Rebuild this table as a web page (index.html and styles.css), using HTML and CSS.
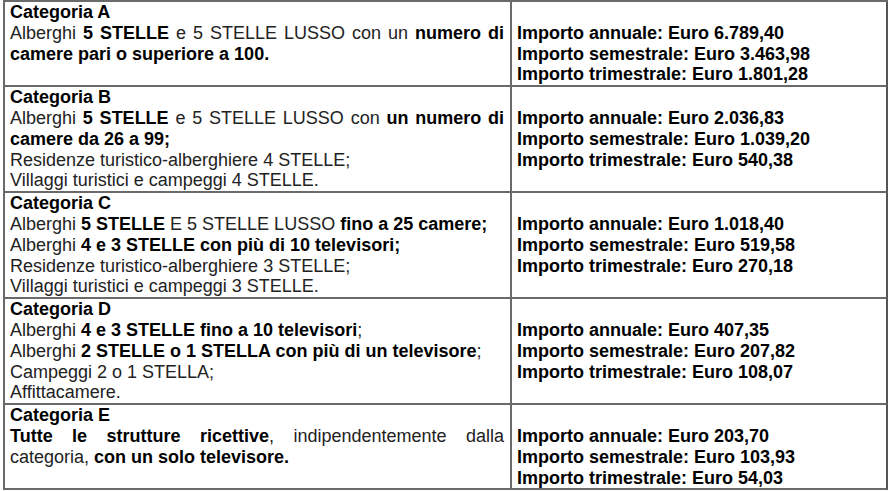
FILE: index.html
```html
<!DOCTYPE html>
<html lang="it">
<head>
<meta charset="utf-8">
<title>Categorie strutture ricettive</title>
<link rel="stylesheet" href="styles.css">
</head>
<body>
<div class="grid">
  <div class="cell left">
    <div class="cat">Categoria A</div>
    <p class="desc">Alberghi <b>5 STELLE</b> e 5 STELLE LUSSO con un <b>numero di camere pari o superiore a 100.</b></p>
  </div>
  <div class="cell right">
    <div class="amt">Importo annuale: Euro 6.789,40</div>
    <div class="amt">Importo semestrale: Euro 3.463,98</div>
    <div class="amt">Importo trimestrale: Euro 1.801,28</div>
  </div>

  <div class="cell left">
    <div class="cat">Categoria B</div>
    <p class="desc">Alberghi <b>5 STELLE</b> e 5 STELLE LUSSO con <b>un numero di camere da 26 a 99;</b></p>
    <p class="desc">Residenze turistico-alberghiere 4 STELLE;</p>
    <p class="desc">Villaggi turistici e campeggi 4 STELLE.</p>
  </div>
  <div class="cell right">
    <div class="amt">Importo annuale: Euro 2.036,83</div>
    <div class="amt">Importo semestrale: Euro 1.039,20</div>
    <div class="amt">Importo trimestrale: Euro 540,38</div>
  </div>

  <div class="cell left">
    <div class="cat">Categoria C</div>
    <p class="desc">Alberghi <b>5 STELLE</b> E 5 STELLE LUSSO <b>fino a 25 camere;</b></p>
    <p class="desc">Alberghi <b>4 e 3 STELLE con più di 10 televisori;</b></p>
    <p class="desc">Residenze turistico-alberghiere 3 STELLE;</p>
    <p class="desc">Villaggi turistici e campeggi 3 STELLE.</p>
  </div>
  <div class="cell right">
    <div class="amt">Importo annuale: Euro 1.018,40</div>
    <div class="amt">Importo semestrale: Euro 519,58</div>
    <div class="amt">Importo trimestrale: Euro 270,18</div>
  </div>

  <div class="cell left">
    <div class="cat">Categoria D</div>
    <p class="desc">Alberghi <b>4 e 3 STELLE fino a 10 televisori</b>;</p>
    <p class="desc">Alberghi <b>2 STELLE o 1 STELLA con più di un televisore</b>;</p>
    <p class="desc">Campeggi 2 o 1 STELLA;</p>
    <p class="desc">Affittacamere.</p>
  </div>
  <div class="cell right">
    <div class="amt">Importo annuale: Euro 407,35</div>
    <div class="amt">Importo semestrale: Euro 207,82</div>
    <div class="amt">Importo trimestrale: Euro 108,07</div>
  </div>

  <div class="cell left">
    <div class="cat">Categoria E</div>
    <p class="desc"><b>Tutte le strutture ricettive</b>, indipendentemente dalla categoria, <b>con un solo televisore.</b></p>
  </div>
  <div class="cell right">
    <div class="amt">Importo annuale: Euro 203,70</div>
    <div class="amt">Importo semestrale: Euro 103,93</div>
    <div class="amt">Importo trimestrale: Euro 54,03</div>
  </div>
</div>
</body>
</html>
```
FILE: styles.css
```css
html, body {
  margin: 0;
  padding: 0;
  background: #ffffff;
}

body {
  font-family: "Liberation Sans", Arial, sans-serif;
  font-size: 18px;
  line-height: 20.8px;
  color: #222222;
}

.grid {
  display: grid;
  grid-template-columns: 507px 376px;
  margin: 0 0 0 3px;
  width: 885px;
  border-top: 2px solid #6a6a6a;
  border-left: 2px solid #6a6a6a;
  box-sizing: border-box;
}

.cell {
  border-right: 2px solid #6a6a6a;
  border-bottom: 2px solid #6a6a6a;
  padding: 0 6px 0 5px;
}

.right {
  padding-top: 20.8px;
  border-right-color: #555555;
}

.cat,
.amt,
b {
  font-weight: bold;
  color: #000000;
}

.desc {
  margin: 0;
  text-align: justify;
}
```
